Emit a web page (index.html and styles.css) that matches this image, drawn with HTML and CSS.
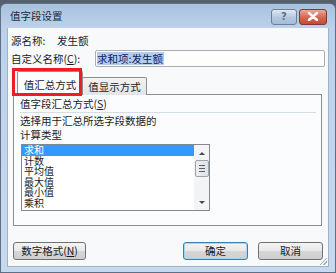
FILE: index.html
```html
<!DOCTYPE html>
<html lang="zh-CN">
<head>
    <meta charset="UTF-8">
    <title>值字段设置</title>
    <link rel="stylesheet" href="styles.css">
</head>
<body>
    <div class="window">
        <!-- barre de titre -->
        <div class="titlebar">
            <span class="title">值字段设置</span>
            <div class="caption-buttons">
                <span class="cap-btn help">?</span>
                <span class="cap-btn close">
                    <svg width="12" height="9" viewBox="0 0 12 9"><path d="M2 1 L10 8 M10 1 L2 8" stroke="#fff" stroke-width="2.4" stroke-linecap="round"/></svg>
                </span>
            </div>
        </div>

        <div class="client">
            <div class="row source">
                <span class="label-short">源名称:</span>
                <span>发生额</span>
            </div>
            <div class="row custom">
                <span class="label">自定义名称(<u>C</u>):</span>
                <div class="textbox"><span class="selected-text">求和项:发生额</span></div>
            </div>

            <div class="tabs">
                <div class="tab active">值汇总方式</div>
                <div class="tab">值显示方式</div>
            </div>
            <div class="panel">
                <div class="group-title">值字段汇总方式(<u>S</u>)</div>
                <div class="separator"></div>
                <div class="hint">选择用于汇总所选字段数据的<br>计算类型</div>
                <div class="listbox">
                    <ul class="items">
                        <li class="selected">求和</li>
                        <li>计数</li>
                        <li>平均值</li>
                        <li>最大值</li>
                        <li>最小值</li>
                        <li>乘积</li>
                    </ul>
                    <div class="scrollbar">
                        <span class="arrow up"></span>
                        <span class="thumb"><i></i><i></i><i></i></span>
                        <span class="arrow down"></span>
                    </div>
                </div>
            </div>

            <div class="footer">
                <button class="btn format">数字格式(<u>N</u>)</button>
                <div class="footer-right">
                    <button class="btn default">确定</button>
                    <button class="btn">取消</button>
                </div>
            </div>
            <span class="grip"></span>
        </div>

        <!-- encadré rouge d'annotation -->
        <div class="highlight"></div>
    </div>
</body>
</html>
```

FILE: styles.css
```css
body {
    margin: 0;
    width: 336px;
    height: 273px;
    overflow: hidden;
    background-color: #56606c;
    font-family: "Noto Sans CJK SC", "Noto Sans", sans-serif;
    font-size: 10.5px;
    color: #1b1b1b;
}
.window {
    position: relative;
    margin-top: 3px;
    height: 268px;
    border: 1px solid #5d7088;
    border-radius: 6px 6px 0 0;
    background: linear-gradient(to bottom, #a8c1de 0px, #bcd2ea 24px, #c6d9ee 100%);
    display: flex;
    flex-direction: column;
}
.titlebar {
    height: 24px;
    display: flex;
    align-items: center;
    padding-left: 9px;
}
.title {
    color: #1e2a3a;
    line-height: 14px;
}
.caption-buttons {
    margin-left: auto;
    margin-right: 8px;
    display: flex;
    gap: 2px;
    margin-top: 1px;
}
.cap-btn {
    height: 14px;
    border: 1px solid #6b7f98;
    border-radius: 3px;
    display: flex;
    align-items: center;
    justify-content: center;
}
.help {
    width: 24px;
    background: linear-gradient(to bottom, #dfe9f4, #b4c9e0 50%, #a4bcd8);
    color: #5d6f86;
    font-family: "DejaVu Sans", sans-serif;
    font-weight: bold;
    font-size: 10px;
}
.close {
    width: 26px;
    border-color: #7a3b30;
    background: linear-gradient(to bottom, #eaa898, #d56b55 50%, #c44a33);
}
.client {
    position: relative;
    flex: 1;
    margin: 0 6px 5px 6px;
    background-color: #f7f9fb;
    border: 1px solid #9fb2c8;
    border-width: 0 1px 1px 1px;
    display: flex;
    flex-direction: column;
}
.row {
    display: flex;
    align-items: center;
    padding-left: 3px;
}
.source {
    margin-top: 4px;
    height: 16px;
}
.label-short {
    width: 46px;
}
.custom {
    margin-top: 2px;
    height: 17px;
}
.label {
    width: 84px;
}
.textbox {
    width: 227px;
    height: 15px;
    border: 1px solid #abadb3;
    border-radius: 2px;
    background-color: #fdfdfe;
    display: flex;
    align-items: center;
    padding-left: 1px;
}
.selected-text {
    background-color: #b3cdef;
    color: #0d2060;
    line-height: 13px;
    padding-right: 1px;
}
.tabs {
    margin-top: 5px;
    padding-left: 9px;
    display: flex;
    align-items: flex-end;
    height: 23px;
    position: relative;
    z-index: 1;
    margin-bottom: -1px;
}
.tab {
    height: 17px;
    width: 63px;
    border: 1px solid #8c8e94;
    border-bottom: none;
    border-radius: 2px 2px 0 0;
    background: linear-gradient(to bottom, #f2f2f2, #e3e4e6);
    display: flex;
    align-items: center;
    justify-content: center;
    margin-left: -1px;
}
.tab.active {
    height: 21px;
    width: 64px;
    background: #fbfcfd;
    padding-top: 2px;
    margin-left: 0;
}
.panel {
    margin: 0 6px 0 5px;
    height: 129px;
    border: 1px solid #8c8e94;
    background-color: #fbfcfd;
    padding: 1px 6px 0 6px;
}
.group-title {
    line-height: 16px;
}
.separator {
    height: 1px;
    background-color: #d5dde6;
    margin: 0 -1px 1px 0;
}
.hint {
    line-height: 14px;
}
.listbox {
    margin-top: 2px;
    margin-left: 1px;
    width: 187px;
    height: 65px;
    border: 1px solid #828790;
    background-color: #ffffff;
    display: flex;
}
.items {
    list-style: none;
    margin: 0;
    padding: 0;
    flex: 1;
}
.items li {
    height: 10.6px;
    line-height: 10.6px;
    font-size: 10px;
    padding-left: 2px;
}
.items li.selected {
    background-color: #3399ff;
    color: #ffffff;
}
.scrollbar {
    width: 15px;
    background-color: #f3f4f6;
    display: flex;
    flex-direction: column;
    align-items: center;
}
.arrow {
    width: 0;
    height: 0;
    border-left: 3px solid transparent;
    border-right: 3px solid transparent;
    margin: 7px 0 5px 0;
}
.arrow.up {
    border-bottom: 3px solid #4a4a4a;
}
.arrow.down {
    border-top: 3px solid #4a4a4a;
    margin: auto 0 6px 0;
}
.thumb {
    width: 12px;
    height: 15px;
    border: 1px solid #9ea3ab;
    border-radius: 2px;
    background: linear-gradient(to right, #eceef1, #dfe2e6);
    display: flex;
    flex-direction: column;
    align-items: center;
    justify-content: center;
    gap: 2px;
}
.thumb i {
    width: 6px;
    height: 1px;
    background-color: #5a5f66;
}
.footer {
    margin-top: 16px;
    padding-left: 5px;
    padding-right: 5px;
    display: flex;
}
.footer-right {
    margin-left: auto;
    display: flex;
    gap: 10px;
}
.btn {
    height: 18px;
    width: 65px;
    padding: 0;
    border: 1px solid #707070;
    border-radius: 3px;
    background: linear-gradient(to bottom, #f4f4f4, #e8e8e8 50%, #d6d6d6 51%, #cfcfcf);
    font-family: "Noto Sans CJK SC", "Noto Sans", sans-serif;
    font-size: 10.5px;
    color: #1b1b1b;
    line-height: 14px;
}
.btn.format {
    width: 73px;
}
.btn.default {
    border-color: #3c7fb1;
    box-shadow: inset 0 0 0 1px #9fd7f6;
}
.grip {
    position: absolute;
    right: 1px;
    bottom: 1px;
    width: 8px;
    height: 8px;
    background: linear-gradient(135deg, transparent 55%, #a0a8b2 55%, #a0a8b2 62%, transparent 62%, transparent 75%, #a0a8b2 75%, #a0a8b2 82%, transparent 82%);
}
.highlight {
    position: absolute;
    left: 11px;
    top: 64px;
    width: 64px;
    height: 22px;
    border: 3px solid #ee1c24;
    z-index: 2;
}
```
